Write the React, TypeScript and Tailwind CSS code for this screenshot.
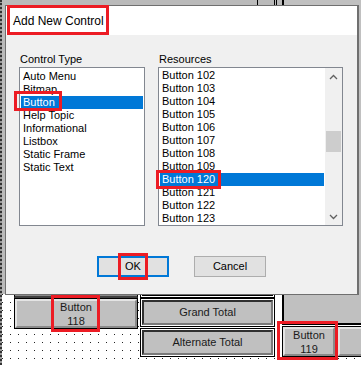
import React from "react";

const font = "font-['Liberation_Sans',Arial,sans-serif]";

function RedBox({ className }: { className: string }) {
  return <div className={"pointer-events-none absolute border-[3px] border-[#ec1c24] " + className} />;
}

function Chevron({ down }: { down?: boolean }) {
  return (
    <svg width="9" height="6" viewBox="0 0 9 6">
      <polyline
        points={down ? "1,1 4.5,4.5 8,1" : "1,5 4.5,1.5 8,5"}
        fill="none"
        stroke="#606060"
        strokeWidth="1.3"
      />
    </svg>
  );
}

const types = ["Auto Menu", "Bitmap", "Button", "Help Topic", "Informational", "Listbox", "Static Frame", "Static Text"];
const resources = [
  "Button 102",
  "Button 103",
  "Button 104",
  "Button 105",
  "Button 106",
  "Button 107",
  "Button 108",
  "Button 109",
  "Button 120",
  "Button 121",
  "Button 122",
  "Button 123",
];

function Row({ text, selected }: { text: string; selected: boolean }) {
  return (
    <div
      className={
        "h-[13px] whitespace-nowrap pl-[2px] text-[11px] leading-[13px] " +
        (selected ? "bg-[#0078d7] text-white" : "text-black")
      }
    >
      {text}
    </div>
  );
}

function BevelButton({ lines }: { lines: string[] }) {
  return (
    <div className="flex h-full w-full flex-col items-center justify-center border-2 border-t-[#e4e4e4] border-l-[#e4e4e4] border-r-[#8a8a8a] border-b-[#8a8a8a] bg-[#c0c0c0] text-[11px] leading-[14px] text-[#1a1a1a]">
      {lines.map((l) => (
        <div key={l}>{l}</div>
      ))}
    </div>
  );
}

function TotalBox({ text }: { text: string }) {
  return (
    <div className="h-full w-full border border-black bg-white p-[1px]">
      <div className="flex h-full w-full items-center justify-center border-2 border-t-[#303030] border-l-[#303030] border-r-[#7a7a7a] border-b-[#7a7a7a] bg-[#c0c0c0] text-[11px] text-[#1a1a1a]">
        {text}
      </div>
    </div>
  );
}

export default function App() {
  return (
    <div className={"relative h-[365px] w-[361px] overflow-hidden bg-white " + font}>
      {/* designer canvas dot grid */}
      <svg className="absolute left-0 top-0" width="361" height="365">
        <defs>
          <pattern id="dots" x="2" y="6" width="8" height="8" patternUnits="userSpaceOnUse">
            <rect width="1" height="1" fill="#222" />
          </pattern>
        </defs>
        <rect width="361" height="365" fill="url(#dots)" />
      </svg>

      {/* canvas controls (free designer canvas) */}
      <div className="absolute left-0 top-0 h-[294px] w-[361px] bg-[#bababa]" />
      <div className="absolute left-0 top-0 h-[365px] w-[2px] border-l-2 border-dotted border-[#333] bg-[#9a9a9a]" />
      <div className="absolute left-[257px] top-0 h-[6px] w-[1px] bg-black" />
      <div className="absolute left-[274px] top-0 h-[6px] w-[1px] bg-black" />
      <div className="absolute left-[276px] top-0 h-[6px] w-[1px] bg-black" />

      <div className="absolute left-[14px] top-[280px] h-[18px] w-[124px] border border-black border-b-2 border-b-[#404040] bg-[#8a8a8a]" />
      <div className="absolute left-[14px] top-[298px] h-[31px] w-[124px] border border-black">
        <BevelButton lines={["Button", "118"]} />
      </div>

      <div className="absolute left-[140px] top-[280px] h-[18px] w-[135px] border border-black bg-white p-[1px]">
        <div className="h-full w-full border border-black bg-[#c0c0c0]" />
      </div>
      <div className="absolute left-[140px] top-[298px] h-[29px] w-[135px]">
        <TotalBox text="Grand Total" />
      </div>
      <div className="absolute left-[140px] top-[328px] h-[29px] w-[135px]">
        <TotalBox text="Alternate Total" />
      </div>

      <div className="absolute left-[282px] top-0 h-[325px] w-[79px] border-l-2 border-b-2 border-black bg-[#c0c0c0]" />
      <div className="absolute left-[282px] top-[326px] h-[31px] w-[54px] border border-black">
        <BevelButton lines={["Button", "119"]} />
      </div>
      <div className="absolute left-[337px] top-[326px] h-[31px] w-[30px] border border-black">
        <BevelButton lines={[""]} />
      </div>

      {/* dialog */}
      <div className="absolute left-[5px] top-[5px] flex h-[290px] w-[354px] flex-col border border-r-2 border-[#6f6f6f] bg-[#f0f0f0]">
        <div className="flex h-[29px] shrink-0 items-center bg-white pl-[7px] text-[12px] text-black">Add New Control</div>
        <div className="flex flex-col pt-[18px]">
          <div className="flex gap-[13px] pl-[13px]">
            <div className="flex w-[126px] flex-col">
              <div className="h-[13px] pl-[1px] text-[11px] leading-[13px] text-black">Control Type</div>
              <div className="mt-[1px] h-[159px] border border-[#828790] bg-white p-[1px] pt-[2px]">
                {types.map((t) => (
                  <Row key={t} text={t} selected={t === "Button"} />
                ))}
              </div>
            </div>
            <div className="flex w-[185px] flex-col">
              <div className="h-[13px] pl-[1px] text-[11px] leading-[13px] text-black">Resources</div>
              <div className="mt-[1px] flex h-[159px] border border-[#828790] bg-white">
                <div className="flex-1 overflow-hidden p-[1px]">
                  {resources.map((t) => (
                    <Row key={t} text={t} selected={t === "Button 120"} />
                  ))}
                </div>
                <div className="flex w-[17px] flex-col items-center bg-[#f0f0f0]">
                  <div className="flex h-[17px] w-full items-center justify-center">
                    <Chevron />
                  </div>
                  <div className="mt-[46px] h-[21px] w-[15px] bg-[#cdcdcd]" />
                  <div className="flex-1" />
                  <div className="flex h-[17px] w-full items-center justify-center">
                    <Chevron down />
                  </div>
                </div>
              </div>
            </div>
          </div>
          <div className="mt-[30px] flex justify-center gap-[25px]">
            <div className="flex h-[21px] w-[72px] items-center justify-center border-2 border-[#0078d7] bg-[#e1e1e1] text-[11px] text-black">
              OK
            </div>
            <div className="flex h-[21px] w-[72px] items-center justify-center border border-[#adadad] bg-[#e1e1e1] text-[11px] text-black">
              Cancel
            </div>
          </div>
        </div>
      </div>

      {/* red annotation boxes */}
      <RedBox className="left-[7px] top-[5px] h-[30px] w-[102px]" />
      <RedBox className="left-[14px] top-[91px] h-[20px] w-[48px]" />
      <RedBox className="left-[156px] top-[170px] h-[19px] w-[65px]" />
      <RedBox className="left-[118px] top-[253px] h-[27px] w-[30px]" />
      <RedBox className="left-[51px] top-[295px] h-[37px] w-[49px]" />
      <RedBox className="left-[277px] top-[321px] h-[39px] w-[61px]" />
    </div>
  );
}
